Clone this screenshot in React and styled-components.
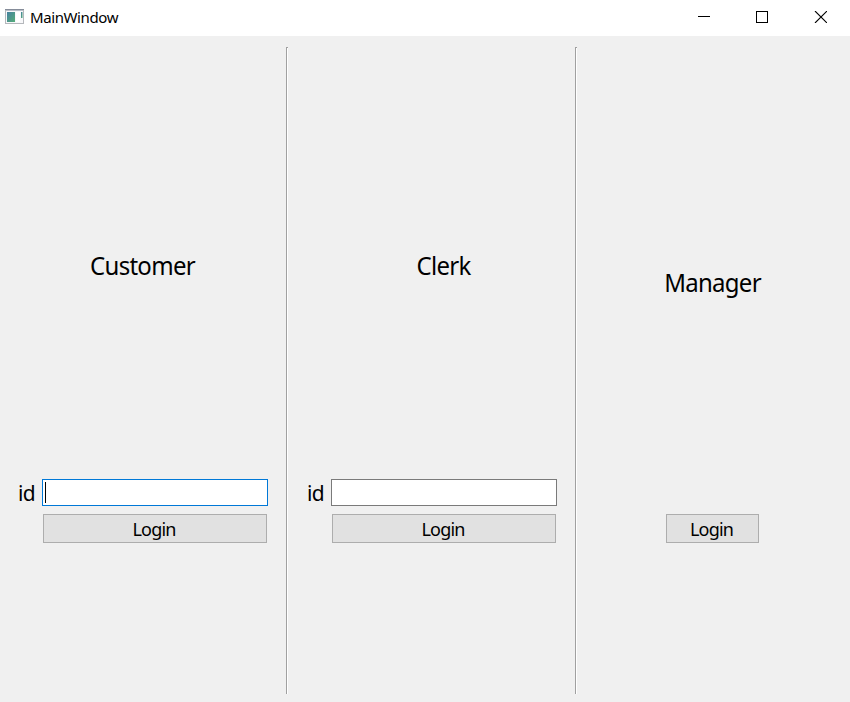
import React from "react";
import styled, { createGlobalStyle } from "styled-components";

const GlobalStyle = createGlobalStyle`
  * { box-sizing: border-box; }
  body { margin: 0; background: #f0f0f0; }
`;

const Window = styled.div`
  width: 850px;
  height: 702px;
  display: flex;
  flex-direction: column;
  overflow: hidden;
  background: #f0f0f0;
  color: #000;
  font-family: "Noto Sans", "Open Sans", sans-serif;
`;

const TitleBar = styled.header`
  height: 36px;
  flex: none;
  display: flex;
  align-items: flex-start;
  background: #fff;
`;

const AppIcon = styled.svg`
  margin: 9px 6px 0 5px;
`;

const Title = styled.div`
  flex: 1;
  font-size: 15px;
  line-height: 20px;
  padding-top: 7px;
  letter-spacing: -0.4px;
`;

const Controls = styled.div`
  display: flex;
  gap: 46px;
  padding: 11px 23px 0 0;

  svg { display: block; }
`;

const Body = styled.main`
  flex: 1;
  display: grid;
  grid-template-columns: 286px 2px 287px 2px 273px;
  padding: 11px 0 8px;
`;

const Divider = styled.div`
  border: solid #a0a0a0;
  border-width: 1px 0 0 1px;
  background: #fff;
`;

const Panel = styled.section`
  display: flex;
  flex-direction: column;
  padding-left: ${(p) => p.$left}px;
`;

const Heading = styled.h1`
  margin: ${(p) => p.$top}px 0 0 ${(p) => p.$left}px;
  width: ${(p) => p.$width}px;
  height: 34px;
  font-size: 25.5px;
  line-height: 34px;
  font-weight: 400;
  text-align: center;
  white-space: nowrap;
  letter-spacing: -0.75px;
  transform: scaleX(0.94);
`;

const FieldRow = styled.label`
  display: flex;
  height: 27px;
  margin-top: 197px;
  font-size: 22px;
  line-height: 27px;
`;

const FieldLabel = styled.span`
  width: 24px;
  letter-spacing: -0.8px;
  transform: scaleX(0.95);
  transform-origin: left;
`;

const Field = styled.div`
  width: 226px;
  height: 27px;
  padding: 2px;
  background: #fff;
  border: 1px solid ${(p) => (p.$focused ? "#0078d7" : "#7a7a7a")};
`;

const Caret = styled.div`
  width: 1px;
  height: 21px;
  background: #000;
`;

const Button = styled.button`
  width: ${(p) => p.$width}px;
  height: 29px;
  margin: ${(p) => p.$top}px 0 0 ${(p) => p.$left}px;
  padding: 0 2px 0 0;
  border: 1px solid #adadad;
  background: #e1e1e1;
  color: #000;
  font-family: inherit;
  font-size: 18px;
  line-height: 24px;
  letter-spacing: -0.8px;
`;

function LoginPanel({ title, left, headingLeft, headingWidth, focused }) {
  return (
    <Panel $left={left}>
      <Heading $top={201} $left={headingLeft} $width={headingWidth}>
        {title}
      </Heading>
      <FieldRow>
        <FieldLabel>id</FieldLabel>
        <Field $focused={focused}>{focused && <Caret />}</Field>
      </FieldRow>
      <Button $width={224} $top={8} $left={25}>Login</Button>
    </Panel>
  );
}

export default function App() {
  return (
    <>
      <GlobalStyle />
      <Window>
        <TitleBar>
          <AppIcon width="19" height="15" viewBox="0 0 19 15">
            <defs>
              <linearGradient id="screen" x1="0" y1="0" x2="1" y2="1">
                <stop offset="0" stopColor="#4681a0" />
                <stop offset="1" stopColor="#55ad78" />
              </linearGradient>
            </defs>
            <rect x="0.5" y="0.5" width="18" height="14" fill="#f8f8fa" stroke="#b5b8bc" />
            <path d="M0 0.5h19" stroke="#858c99" />
            <path d="M1 1.5h17" stroke="#b9bec8" />
            <rect x="2" y="3" width="8" height="10" fill="url(#screen)" />
            <rect x="11" y="3" width="4" height="10" fill="#fff" />
            <rect x="16" y="3" width="1.5" height="6" fill="url(#screen)" />
          </AppIcon>
          <Title>MainWindow</Title>
          <Controls>
            <svg width="12" height="12" shapeRendering="crispEdges">
              <path d="M0 5.5h12" stroke="#000" />
            </svg>
            <svg width="12" height="12" shapeRendering="crispEdges">
              <rect x="0.5" y="0.5" width="11" height="11" fill="none" stroke="#000" />
            </svg>
            <svg width="13" height="12">
              <path d="M1 0l12 12M13 0L1 12" stroke="#000" strokeWidth="1.1" />
            </svg>
          </Controls>
        </TitleBar>
        <Body>
          <LoginPanel title="Customer" left={18} headingLeft={0} headingWidth={249} focused />
          <Divider />
          <LoginPanel title="Clerk" left={19} headingLeft={24} headingWidth={225} />
          <Divider />
          <Panel $left={0}>
            <Heading $top={218} $left={0} $width={271}>Manager</Heading>
            <Button $width={93} $top={215} $left={89}>Login</Button>
          </Panel>
        </Body>
      </Window>
    </>
  );
}
